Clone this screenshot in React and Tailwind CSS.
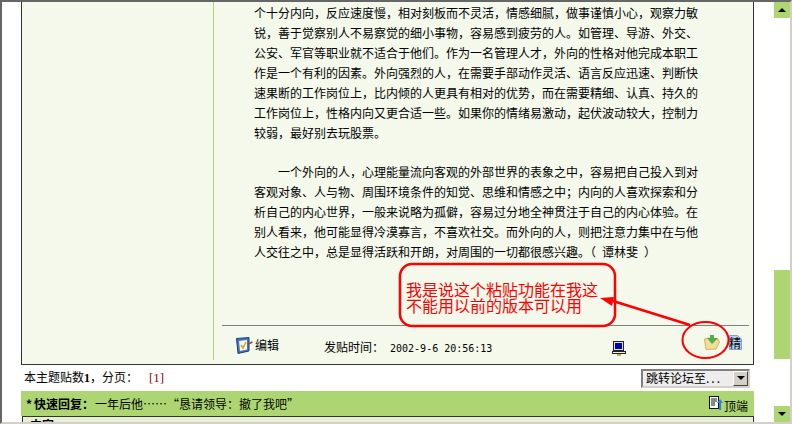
const PARA1 = [
  '个十分内向，反应速度慢，相对刻板而不灵活，情感细腻，做事谨慎小心，观察力敏',
  '锐，善于觉察别人不易察觉的细小事物，容易感到疲劳的人。如管理、导游、外交、',
  '公安、军官等职业就不适合于他们。作为一名管理人才，外向的性格对他完成本职工',
  '作是一个有利的因素。外向强烈的人，在需要手部动作灵活、语言反应迅速、判断快',
  '速果断的工作岗位上，比内倾的人更具有相对的优势，而在需要精细、认真、持久的',
  '工作岗位上，性格内向又更合适一些。如果你的情绪易激动，起伏波动较大，控制力',
  '较弱，最好别去玩股票。',
]

const PARA2 = [
  '客观对象、人与物、周围环境条件的知觉、思维和情感之中；内向的人喜欢探索和分',
  '析自己的内心世界，一般来说略为孤僻，容易过分地全神贯注于自己的内心体验。在',
  '别人看来，他可能显得冷漠寡言，不喜欢社交。而外向的人，则把注意力集中在与他',
]

function EditIcon() {
  return (
    <svg width="17" height="17" viewBox="0 0 17 17">
      <path d="M0.5 1.5 L13 0.5 L13 14 L2 16.5 Z" fill="#3f74c4" stroke="#1f3f80" />
      <path d="M3 4 L11 3 L11 12.5 L4 14 Z" fill="#f6f6e6" />
      <path d="M5 8 L7 11 L10 5" fill="none" stroke="#d9a020" strokeWidth="1.5" />
      <path d="M12 7 L16.5 5" stroke="#a83848" strokeWidth="1.5" />
    </svg>
  )
}

function PcIcon() {
  return (
    <svg width="14" height="15" viewBox="0 0 14 15">
      <rect x="1.5" y="0.5" width="10" height="9" fill="#e0e0e0" stroke="#222222" />
      <rect x="3" y="2" width="7" height="6" fill="#0000b0" />
      <rect x="0.5" y="10.5" width="13" height="2" fill="#f0f0f0" stroke="#222222" />
      <rect x="5" y="13" width="4" height="2" fill="#c8b040" />
    </svg>
  )
}

function FolderIcon() {
  return (
    <svg width="16" height="15" viewBox="0 0 16 15">
      <path d="M0.5 4 L5 3 L14 4 L15.5 7 L12 14 L2 14.5 Z" fill="#f4dc92" stroke="#d2b26a" />
      <path d="M6 0 H10 V3 H14 L8 9 L3 3 H6 Z" fill="#4fae55" />
    </svg>
  )
}

function DocIcon() {
  return (
    <svg width="13" height="15" viewBox="0 0 13 15">
      <path d="M0.5 0.5 H8.5 L12.5 4 V14.5 H0.5 Z" fill="#b9cff0" stroke="#7f9fd0" />
    </svg>
  )
}

function TopIcon() {
  return (
    <svg width="15" height="15" viewBox="0 0 15 15">
      <rect x="0.5" y="0.5" width="9" height="12" fill="#ffffff" stroke="#111111" />
      <path d="M2 3 H8 M2 5 H8 M2 7 H6 M2 9 H6" stroke="#111111" />
      <path d="M10 14 V7 H8 L11 3 L14 7 H12 V14 Z" fill="#2f7fe0" />
    </svg>
  )
}

export default function App() {
  return (
    <div className="relative w-[792px] h-[424px] overflow-hidden bg-white border-t-2 border-l-2 border-r-2 border-b-2 border-t-[#666666] border-l-[#666666] border-r-[#d4d0c8] border-b-[#d4d0c8] flex font-['Noto_Sans_CJK_SC',sans-serif] text-[12px] text-black">
      <div className="w-[772px] shrink-0 pl-[19px]">
        {/* 帖子 */}
        <div className="w-[733px] h-[363px] flex bg-[#f4f9ec] border-l border-r border-b border-[#333333]">
          <div className="w-[192px] h-[358px] shrink-0 border-r border-[#add672]" />
          <div className="flex-1 pl-[8px] pr-[4px] flex flex-col">
            <div className="h-[323px] pl-[32px] pt-[1px] leading-[20px] whitespace-nowrap">
              {PARA1.map(l => <div key={l}>{l}</div>)}
              <div className="h-[19px]" />
              <div className="pl-[24px]">一个外向的人，心理能量流向客观的外部世界的表象之中，容易把自己投入到对</div>
              {PARA2.map(l => <div key={l}>{l}</div>)}
              <div>人交往之中，总是显得活跃和开朗，对周围的一切都很感兴趣。（&ensp;谭林斐&ensp;）</div>
            </div>
            <div className="flex-1 border-t border-[#808080] flex items-center">
              <div className="w-[102px] shrink-0 pl-[14px] flex items-center gap-[2px]">
                <EditIcon />
                <span>编辑</span>
              </div>
              <div className="w-[288px] shrink-0 mt-[3px] whitespace-nowrap">
                发贴时间：<span className="ml-[6px] font-['DejaVu_Sans_Mono',monospace] text-[10px]">2002-9-6 20:56:13</span>
              </div>
              <div className="w-[92px] shrink-0 mt-[6px] flex"><PcIcon /></div>
              <div className="w-[25px] shrink-0 mt-[-5px] flex"><FolderIcon /></div>
              <div className="relative w-[13px] h-[15px] mt-[-5px]">
                <DocIcon />
                <span className="absolute left-0 top-0 leading-[15px]">精</span>
              </div>
            </div>
          </div>
        </div>

        {/* 分页 */}
        <div className="w-[733px] h-[26px] flex items-center justify-between pl-[3px] pr-[4px]">
          <div className="whitespace-nowrap">
            本主题贴数<b className="font-['Liberation_Serif',serif]">1</b>，分页：<span className="ml-[11px] text-[#990000] font-['Liberation_Serif',serif] text-[13px]">[1]</span>
          </div>
          <div className="w-[109px] h-[19px] flex items-center border-2 border-[#808080] border-b-[#d4d0c8] border-r-[#d4d0c8] bg-[#ededed]">
            <span className="flex-1 pl-[3px] whitespace-nowrap overflow-hidden">跳转论坛至<span className="tracking-[2px]">...</span></span>
            <span className="w-[15px] h-[15px] flex items-center justify-center bg-[#d4d0c8] border border-[#ffffff] border-r-[#404040] border-b-[#404040]">
              <span className="w-0 h-0 border-l-[4px] border-r-[4px] border-t-[4px] border-l-transparent border-r-transparent border-t-black" />
            </span>
          </div>
        </div>

        {/* 快速回复 */}
        <div className="w-[733px] h-[25px] bg-[#add672] flex items-center justify-between pl-[5px] pr-[6px]">
          <div className="whitespace-nowrap flex">
            <b className="w-[8px]">*</b>
            <b>快速回复：</b>
            <span className="ml-[1px]">一年后他……“恳请领导：撤了我吧”</span>
          </div>
          <div className="flex items-start">
            <TopIcon />
            <span className="mt-[4px] leading-[12px]">顶端</span>
          </div>
        </div>
        <div className="w-[732px] ml-[1px] h-[6px] bg-[#e5f0d5] border-t border-l border-r border-[#333333] pl-[7px] pt-[1px] leading-[14px] font-bold overflow-hidden">
          内容
        </div>
      </div>

      {/* 滚动条 */}
      <div className="w-[16px] h-[420px] shrink-0 flex flex-col bg-white">
        <div className="h-[16px] bg-[#add672] flex items-center justify-center">
          <span className="w-0 h-0 border-l-[4px] border-r-[4px] border-b-[4px] border-l-transparent border-r-transparent border-b-black" />
        </div>
        <div className="h-[252px]" />
        <div className="h-[89px] bg-[#add672]" />
        <div className="h-[47px]" />
        <div className="h-[16px] bg-[#add672] flex items-center justify-center">
          <span className="w-0 h-0 border-l-[4px] border-r-[4px] border-t-[4px] border-l-transparent border-r-transparent border-t-black" />
        </div>
      </div>

      {/* 手绘批注 */}
      <svg className="absolute left-[-2px] top-[-2px] pointer-events-none" width="792" height="424" viewBox="0 0 792 424">
        <rect x="400" y="264" width="215" height="62" rx="12" fill="none" stroke="#ff0000" strokeWidth="2.5" />
        <path d="M613 301 L690 325" stroke="#ff0000" strokeWidth="2.5" />
        <path d="M600 298 L614 297 L612 306 Z" fill="#ff0000" />
        <ellipse cx="705.5" cy="340" rx="23" ry="18" fill="none" stroke="#ff0000" strokeWidth="2" />
      </svg>
      <div className="absolute left-[404px] top-[279px] text-[16px] leading-[16px] text-[#ff0000] whitespace-nowrap">
        <div>我是说这个粘贴功能在我这</div>
        <div>不能用以前的版本可以用</div>
      </div>
    </div>
  )
}
